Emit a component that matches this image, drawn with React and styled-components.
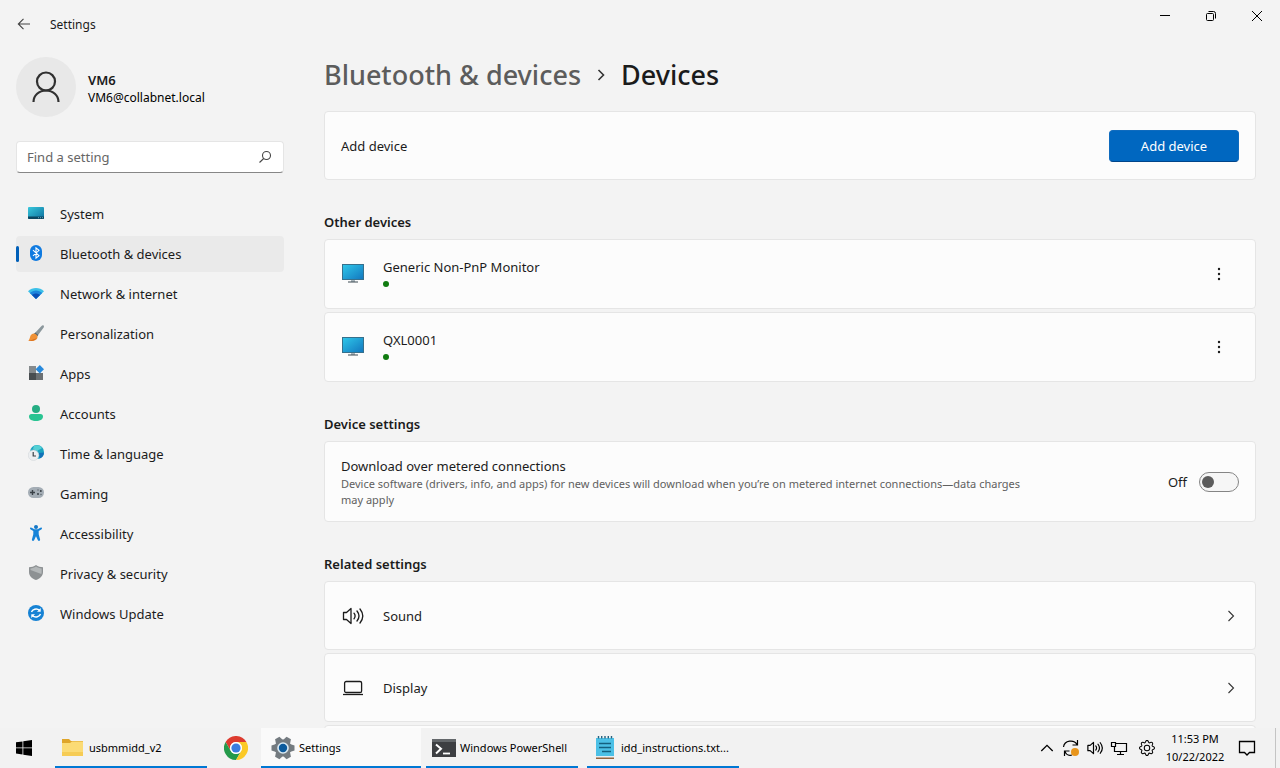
import React, { useState } from 'react';
import styled, { createGlobalStyle } from 'styled-components';
import { BsGear } from 'react-icons/bs';

const GlobalStyle = createGlobalStyle`
    * {
        box-sizing: border-box;
    }

    body {
        margin: 0;
        background-color: #f3f3f3;
        color: #1b1b1b;
        font-family: 'Noto Sans', 'Open Sans', sans-serif;
        font-size: 13px;
        line-height: 20px;
    }

    button, input {
        font: inherit;
        color: inherit;
    }

    a {
        color: inherit;
        text-decoration: none;
    }

    svg {
        display: block;
        flex: none;
    }
`;

const Desktop = styled.div`
    display: flex;
    flex-direction: column;
    height: 100vh;
    overflow: hidden;
`;

const Window = styled.div`
    flex: 1;
    min-height: 0;
    overflow: hidden;
`;

const TitleBar = styled.header`
    display: flex;
    justify-content: space-between;
    height: 48px;
`;

const TitleGroup = styled.div`
    display: flex;
    align-items: center;
    gap: 10px;
    padding-left: 8px;
    font-size: 12px;
`;

const WindowTitle = styled.span`
    padding-top: 2px;
`;

const PlainButton = styled.button`
    display: flex;
    align-items: center;
    justify-content: center;
    width: ${(props) => props.$width || 32}px;
    height: 32px;
    padding: 0;
    border: 0;
    border-radius: 4px;
    background: transparent;
`;

const WindowControls = styled.div`
    display: flex;
`;

const Body = styled.div`
    display: flex;
    gap: 40px;
    padding: 9px 24px 0 16px;
`;

const Sidebar = styled.aside`
    flex: none;
    width: 268px;
`;

const Profile = styled.div`
    display: flex;
    align-items: center;
    gap: 12px;
    margin-bottom: 24px;
`;

const Avatar = styled.div`
    width: 60px;
    height: 60px;
    border-radius: 50%;
    background-color: #e8e8e8;
`;

const ProfileText = styled.div`
    padding-top: 4px;
    line-height: 18px;
`;

const ProfileName = styled.div`
    font-weight: 600;
`;

const ProfileMail = styled.div`
    font-size: 12px;
    color: #000;
`;

const SearchBox = styled.label`
    display: flex;
    align-items: center;
    height: 32px;
    padding: 0 10px;
    border: 1px solid #e5e5e5;
    border-bottom-color: #868686;
    border-radius: 4px;
    background-color: #fff;
`;

const SearchInput = styled.input`
    flex: 1;
    min-width: 0;
    padding: 0;
    border: 0;
    outline: 0;
    background: transparent;

    &::placeholder {
        color: #666;
        opacity: 1;
    }
`;

const Nav = styled.nav`
    display: flex;
    flex-direction: column;
    gap: 4px;
    margin-top: 23px;
`;

const NavLink = styled.a`
    display: flex;
    align-items: center;
    gap: 9px;
    height: 36px;
    border-radius: 4px;
    background-color: ${(props) => (props.$active ? '#eaeaea' : 'transparent')};

    &::before {
        content: '';
        width: 3px;
        height: 16px;
        border-radius: 2px;
        background-color: ${(props) => (props.$active ? '#005fb8' : 'transparent')};
    }
`;

const NavText = styled.span`
    padding-left: 7px;
`;

const Main = styled.main`
    flex: 1;
    min-width: 0;
`;

const Breadcrumb = styled.div`
    display: flex;
    align-items: center;
    gap: 12px;
    margin-bottom: 18px;
    font-size: 27px;
    font-weight: 500;
    line-height: 36px;
    color: #5c5c5c;
`;

const PageTitle = styled.h1`
    margin: 0;
    font: inherit;
    color: #1b1b1b;
`;

const SectionTitle = styled.h2`
    margin: 32px 0 7px;
    font-size: 13px;
    font-weight: 600;
    line-height: 20px;
`;

const CardList = styled.div`
    display: flex;
    flex-direction: column;
    gap: 3px;
`;

const Card = styled.div`
    display: flex;
    align-items: center;
    gap: 18px;
    min-height: ${(props) => props.$minHeight || 69}px;
    padding: 8px 16px;
    border: 1px solid #e5e5e5;
    border-radius: 4px;
    background-color: #fcfcfc;
`;

const CardText = styled.div`
    flex: 1;
    min-width: 0;
`;

const Description = styled.div`
    max-width: 690px;
    font-size: 11px;
    line-height: 16px;
    color: #606060;
`;

const StatusDot = styled.div`
    width: 6px;
    height: 6px;
    margin: 4px 0;
    border-radius: 50%;
    background-color: #107c10;
`;

const PrimaryButton = styled.button`
    width: 130px;
    height: 32px;
    border: 1px solid #0f6bbe;
    border-bottom-color: #00458a;
    border-radius: 4px;
    background-color: #0067c0;
    color: #fff;
`;

const ToggleLabel = styled.label`
    display: flex;
    align-items: center;
    gap: 12px;
`;

const Toggle = styled.input`
    appearance: none;
    display: flex;
    align-items: center;
    justify-content: ${(props) => (props.checked ? 'flex-end' : 'flex-start')};
    width: 40px;
    height: 20px;
    margin: 0;
    padding: 0 2px;
    border: 1px solid #858585;
    border-radius: 10px;
    background-color: ${(props) => (props.checked ? '#0067c0' : '#f6f6f6')};

    &::before {
        content: '';
        width: 12px;
        height: 12px;
        border-radius: 50%;
        background-color: ${(props) => (props.checked ? '#fff' : '#5c5c5c')};
    }
`;

const Taskbar = styled.footer`
    display: flex;
    flex: none;
    gap: 1px;
    height: 40px;
    background-color: #f2f2f2;
    color: #000;
    font-size: 11px;
    line-height: 18px;
`;

const StartButton = styled.button`
    display: flex;
    align-items: center;
    justify-content: center;
    width: 48px;
    padding: 0;
    border: 0;
    background: transparent;
`;

const TaskList = styled.div`
    display: flex;
    flex: 1;
    gap: 1px;
    padding-left: 2px;
`;

const TaskButton = styled.button`
    display: flex;
    align-items: center;
    gap: 4px;
    width: ${(props) => (props.$active ? 160 : 152)}px;
    margin: 0 ${(props) => (props.$active ? 0 : 4)}px;
    padding: 2px ${(props) => (props.$active ? 10 : 6)}px 0;
    border: 0;
    border-bottom: 2px solid #0078d4;
    background-color: ${(props) => (props.$active ? '#fafafa' : 'transparent')};
    white-space: nowrap;
`;

const Tray = styled.div`
    display: flex;
    align-items: center;
`;

const TrayButton = styled.button`
    display: flex;
    align-items: center;
    justify-content: center;
    width: ${(props) => props.$width || 24}px;
    height: 40px;
    padding: 0;
    border: 0;
    background: transparent;
`;

const Clock = styled.div`
    width: 64px;
    text-align: center;
    white-space: nowrap;
`;

const ShowDesktop = styled.button`
    align-self: stretch;
    width: 5px;
    margin-left: 8px;
    padding: 0;
    border: 0;
    border-left: 1px solid #c4c4c4;
    background: transparent;
`;

const ChevronIcon = ({ size = 16, stroke = 1.1 }) => (
    <svg width={size} height={size} viewBox="0 0 16 16" fill="none" stroke="#333" strokeWidth={stroke}>
        <path d="M5.5 3l5 5-5 5" />
    </svg>
);

const MonitorIcon = () => (
    <svg width="24" height="24" viewBox="0 0 24 24">
        <defs>
            <linearGradient id="monitor" x1="0" y1="0" x2="1" y2="1">
                <stop offset="0" stopColor="#2fc8ea" />
                <stop offset="1" stopColor="#1276be" />
            </linearGradient>
        </defs>
        <rect x="1.5" y="2.5" width="21" height="15" fill="url(#monitor)" stroke="#36708c" />
        <path d="M10 18h4v2h-4z" fill="#a8b4ba" />
        <path d="M7 19.5h10v1H7z" fill="#3d4a52" />
    </svg>
);

const SpeakerIcon = ({ size = 24 }) => (
    <svg width={size} height={size} viewBox="0 0 24 24" fill="none" stroke="currentColor" strokeWidth={size < 20 ? 1.6 : 1.3} strokeLinejoin="round" strokeLinecap="round">
        <path d="M2.5 8.500h3L10 4.500v15l-4.500-4h-3z" />
        <path d="M13 9.200q2.200 2.800 0 5.600M16 7q4 5 0 10M19 5q5.600 7 0 14" />
    </svg>
);

const LaptopIcon = () => (
    <svg width="24" height="24" viewBox="0 0 24 24" fill="none" stroke="currentColor" strokeWidth="1.3">
        <rect x="3.600" y="5.500" width="17" height="11" rx="1.600" />
        <path d="M2 18.500h20" />
    </svg>
);

const navItems = [
    {
        name: 'System',
        icon: (
            <>
                <defs>
                    <linearGradient id="system" x1="0" y1="0" x2="1" y2="1">
                        <stop offset="0" stopColor="#38c8dc" />
                        <stop offset="1" stopColor="#0c6f9e" />
                    </linearGradient>
                </defs>
                <rect y="2" width="16" height="12" rx="1" fill="url(#system)" />
                <path d="M0 11.500h16V13a1 1 0 0 1-1 1H1a1 1 0 0 1-1-1z" fill="#0b4560" />
                <path d="M10 12.700h1M12 12.700h1M14 12.700h1" stroke="#7fc4da" strokeWidth=".8" />
            </>
        ),
    },
    {
        name: 'Bluetooth & devices',
        active: true,
        icon: (
            <>
                <rect x="2" width="12" height="16" rx="6" fill="#0f7ae0" />
                <path d="M5 5.200l6 5.500-3 2.500V2.800l3 2.500-6 5.500" fill="none" stroke="#fff" strokeWidth="1.100" />
            </>
        ),
    },
    {
        name: 'Network & internet',
        icon: (
            <>
                <path d="M0 6.300C4.500 1.900 11.500 1.900 16 6.300L8 14z" fill="#3bc0e8" />
                <path d="M1.800 8C5.500 4.600 10.500 4.600 14.200 8L8 14z" fill="#1d86dc" />
                <path d="M4 10.100c2.400-2 5.600-2 8 0L8 14z" fill="#0a4fb4" />
            </>
        ),
    },
    {
        name: 'Personalization',
        icon: (
            <>
                <path d="M15.600.500c.6.600.4 1.500-.1 2.200L9 11.500 6 9 13.500.900c.600-.700 1.500-1 2.100-.400z" fill="#8b979c" />
                <path d="M9 11.500L6 9l1.300-1.500 3 2.500z" fill="#56666f" />
                <path d="M5.500 8.500c2 0 4 1.500 4 3.400C9.500 15 5 16.800.3 15.800 2.500 14.200 1.300 9 5.500 8.500z" fill="#f09237" />
                <path d="M.3 15.800c3 .3 7-.500 8.700-2.900-2 .9-4.800 2-8.700 2.900z" fill="#cf651b" />
            </>
        ),
    },
    {
        name: 'Apps',
        icon: (
            <>
                <path d="M1 1h7v7H1z" fill="#858a8d" />
                <path d="M1 8h7v7H1z" fill="#484d50" />
                <path d="M8 8h7v7H8z" fill="#6b7073" />
                <path d="M11.800 0L16 4.200l-4.200 4.200-4.200-4.200z" fill="#2789dc" />
            </>
        ),
    },
    {
        name: 'Accounts',
        icon: (
            <>
                <circle cx="8" cy="4" r="4" fill="#25ad83" />
                <path d="M3.500 9h9A2.500 2.500 0 0 1 15 11.500C15 14.500 12 16 8 16s-7-1.500-7-4.500A2.500 2.500 0 0 1 3.500 9z" fill="#29c492" />
            </>
        ),
    },
    {
        name: 'Time & language',
        icon: (
            <>
                <circle cx="9" cy="7" r="7" fill="#1ba4c0" />
                <path d="M6 .700c4-1.500 7 .2 8 2.300-1.500 2-3.500 1-4.500 3L5 4z" fill="#54d0d4" />
                <path d="M11 8l5-.500c0 3-2 5.500-4.500 6z" fill="#1272b8" />
                <circle cx="5.500" cy="10.200" r="5.300" fill="#eceef0" stroke="#cdd2d6" strokeWidth=".5" />
                <path d="M5.200 7v4h2.800" fill="none" stroke="#3a4046" strokeWidth="1.200" />
            </>
        ),
    },
    {
        name: 'Gaming',
        icon: (
            <>
                <rect y="2" width="16" height="11" rx="5.500" fill="#a4adb5" />
                <path d="M4.500 5v5M2 7.500h5" stroke="#394046" strokeWidth="1.400" />
                <circle cx="10" cy="9" r="1" fill="#394046" />
                <circle cx="12.800" cy="6" r="1" fill="#394046" />
                <circle cx="10" cy="5" r=".7" fill="#59636b" />
                <circle cx="13" cy="9.500" r=".7" fill="#59636b" />
            </>
        ),
    },
    {
        name: 'Accessibility',
        icon: (
            <>
                <circle cx="8" cy="2" r="2" fill="#1577c6" />
                <path d="M2.500 2.600c-.9.600-.5 1.600.2 1.900L5.300 6v3.300L3.900 14.600c-.3 1.500 1.700 1.900 2.200.6L8 11.200l1.900 4c.5 1.300 2.500.9 2.200-.6L10.700 9.300V6l2.600-1.500c.7-.3 1.100-1.300.2-1.900-.6-.4-1 0-1.600.300L9.600 4.200H6.400L4.100 2.900c-.6-.300-1-.700-1.600-.300z" fill="#1683d8" />
            </>
        ),
    },
    {
        name: 'Privacy & security',
        icon: (
            <>
                <path d="M8 0c2 1.600 4.500 2.200 7 2.300V7c0 3.800-3 6.800-7 8C4 13.800 1 10.800 1 7V2.300C3.500 2.200 6 1.600 8 0z" fill="#8d9193" />
                <path d="M8 1.500c1.700 1.200 3.700 1.700 5.700 1.900V7c0 .7-.1 1.300-.4 2L2.500 5V3.400C4.500 3.200 6.300 2.700 8 1.500z" fill="#b3b7b8" />
            </>
        ),
    },
    {
        name: 'Windows Update',
        icon: (
            <>
                <circle cx="8" cy="8" r="8" fill="#1682d4" />
                <path d="M3.500 7C4.300 4.500 8.500 2.700 11.800 5.500M12.500 9c-.8 2.500-5 4.300-8.300 1.500" fill="none" stroke="#fff" strokeWidth="1.400" />
                <path d="M12.700 3v3.700H9zM3.300 13V9.300H7z" fill="#fff" />
            </>
        ),
    },
];

const devices = ['Generic Non-PnP Monitor', 'QXL0001'];

function TopBar() {
    return (
        <TitleBar>
            <TitleGroup>
                <PlainButton aria-label="Back">
                    <svg width="14" height="14" viewBox="0 0 14 14" fill="none" stroke="#444" strokeWidth="1.100">
                        <path d="M13 7H1.500M6.500 1.800L1.300 7l5.200 5.200" />
                    </svg>
                </PlainButton>
                <WindowTitle>Settings</WindowTitle>
            </TitleGroup>
            <WindowControls>
                <PlainButton $width={46} aria-label="Minimize">
                    <svg width="10" height="10" viewBox="0 0 10 10" stroke="#000">
                        <path d="M0 4.500h10" />
                    </svg>
                </PlainButton>
                <PlainButton $width={46} aria-label="Restore">
                    <svg width="10" height="10" viewBox="0 0 10 10" fill="none" stroke="#000">
                        <rect x=".5" y="2.500" width="7" height="7" rx="1" />
                        <path d="M2.500.500h5a2 2 0 0 1 2 2v5" />
                    </svg>
                </PlainButton>
                <PlainButton $width={46} aria-label="Close">
                    <svg width="10" height="10" viewBox="0 0 10 10" stroke="#000">
                        <path d="M0 0l10 10M10 0L0 10" />
                    </svg>
                </PlainButton>
            </WindowControls>
        </TitleBar>
    );
}

function SideNav() {
    return (
        <Sidebar>
            <Profile>
                <Avatar>
                    <svg width="60" height="60" viewBox="0 0 60 60" fill="none" stroke="#303030" strokeWidth="2.200">
                        <circle cx="30" cy="24.500" r="9" />
                        <path d="M17.500 45C17.500 38.500 23 33.500 30 33.500S42.500 38.500 42.500 45" />
                    </svg>
                </Avatar>
                <ProfileText>
                    <ProfileName>VM6</ProfileName>
                    <ProfileMail>VM6@collabnet.local</ProfileMail>
                </ProfileText>
            </Profile>
            <SearchBox>
                <SearchInput type="text" placeholder="Find a setting" aria-label="Find a setting" />
                <svg width="16" height="16" viewBox="0 0 16 16" fill="none" stroke="#444" strokeWidth="1.100">
                    <circle cx="9.500" cy="6.500" r="4" />
                    <path d="M6.700 9.500L2.500 13.500" />
                </svg>
            </SearchBox>
            <Nav>
                {navItems.map((item) => (
                    <NavLink key={item.name} href="#" $active={item.active}>
                        <svg width="16" height="18" viewBox="0 0 16 18">{item.icon}</svg>
                        <NavText>{item.name}</NavText>
                    </NavLink>
                ))}
            </Nav>
        </Sidebar>
    );
}

function DevicesPage() {
    const [metered, setMetered] = useState(false);

    return (
        <Main>
            <Breadcrumb>
                <a href="#">Bluetooth &amp; devices</a>
                <ChevronIcon stroke={1.6} />
                <PageTitle>Devices</PageTitle>
            </Breadcrumb>
            <Card>
                <CardText>Add device</CardText>
                <PrimaryButton>Add device</PrimaryButton>
            </Card>

            <SectionTitle>Other devices</SectionTitle>
            <CardList>
                {devices.map((device) => (
                    <Card key={device} $minHeight={70}>
                        <MonitorIcon />
                        <CardText>
                            {device}
                            <StatusDot />
                        </CardText>
                        <PlainButton $width={40} aria-label={`More options for ${device}`}>
                            <svg width="16" height="16" viewBox="0 0 16 16" fill="#1b1b1b">
                                <circle cx="8" cy="3" r="1.200" />
                                <circle cx="8" cy="8" r="1.200" />
                                <circle cx="8" cy="13" r="1.200" />
                            </svg>
                        </PlainButton>
                    </Card>
                ))}
            </CardList>

            <SectionTitle>Device settings</SectionTitle>
            <Card $minHeight={81}>
                <CardText>
                    Download over metered connections
                    <Description>
                        Device software (drivers, info, and apps) for new devices will download when you’re on metered internet connections—data charges may apply
                    </Description>
                </CardText>
                <ToggleLabel>
                    {metered ? 'On' : 'Off'}
                    <Toggle
                        type="checkbox"
                        role="switch"
                        aria-label="Download over metered connections"
                        checked={metered}
                        onChange={() => setMetered(!metered)}
                    />
                </ToggleLabel>
            </Card>

            <SectionTitle>Related settings</SectionTitle>
            <CardList>
                <Card as="a" href="#">
                    <SpeakerIcon />
                    <CardText>Sound</CardText>
                    <ChevronIcon />
                </Card>
                <Card as="a" href="#">
                    <LaptopIcon />
                    <CardText>Display</CardText>
                    <ChevronIcon />
                </Card>
                <Card />
            </CardList>
        </Main>
    );
}

function BottomBar() {
    return (
        <Taskbar>
            <StartButton aria-label="Start">
                <svg width="16" height="16" viewBox="0 0 16 16">
                    <path d="M0 2.300l6.500-.9v6.100H0zM7.300 1.300L16 0v7.500H7.300zM0 8.300h6.500v6.200L0 13.600zM7.300 8.300H16V16l-8.700-1.300z" />
                </svg>
            </StartButton>
            <TaskList>
                <TaskButton>
                    <svg width="24" height="22" viewBox="0 0 24 22">
                        <path d="M1 2h7l2 2h12v4H1z" fill="#dfa52a" />
                        <path d="M1 6h8l2-1.500h11V19H1z" fill="#fbdb75" />
                        <path d="M1 15h21v4H1z" fill="#f6cc55" />
                    </svg>
                    <span>usbmmidd_v2</span>
                </TaskButton>
                <StartButton aria-label="Google Chrome">
                    <svg width="24" height="24" viewBox="0 0 24 24">
                        <path d="M1.600 6A12 12 0 0 1 22.400 6L12 6A6 6 0 0 0 6.800 15Z" fill="#dd3b2f" />
                        <path d="M1.600 6L6.800 15A6 6 0 0 0 17.200 15L12 24A12 12 0 0 1 1.600 6Z" fill="#259a4b" />
                        <path d="M22.400 6L12 6A6 6 0 0 1 17.200 15L12 24A12 12 0 0 0 22.400 6Z" fill="#fbc926" />
                        <circle cx="12" cy="12" r="6" fill="#fff" />
                        <circle cx="12" cy="12" r="4.600" fill="#3b7de0" />
                    </svg>
                </StartButton>
                <TaskButton $active>
                    <svg width="24" height="24" viewBox="0 0 24 24">
                        {[0, 60, 120].map((angle) => (
                            <path key={angle} d="M8 5L9.500.500h5L16 5v14l-1.500 4.500h-5L8 19z" fill="#747b80" transform={`rotate(${angle + 30} 12 12)`} />
                        ))}
                        <circle cx="12" cy="12" r="8.500" fill="#747b80" />
                        <circle cx="12" cy="12" r="5.800" fill="#d9e9f3" />
                        <circle cx="12" cy="12" r="4.200" fill="#0b5a9c" />
                    </svg>
                    <span>Settings</span>
                </TaskButton>
                <TaskButton>
                    <svg width="24" height="20" viewBox="0 0 24 20">
                        <path d="M0 1h24v18H0z" fill="#3d3f42" />
                        <path d="M0 1h24v3H0z" fill="#63676a" />
                        <path d="M4 6.500l5 4.300-5 4.700" fill="none" stroke="#fff" strokeWidth="2" />
                        <path d="M11 15.500h7" stroke="#fff" strokeWidth="1.800" />
                    </svg>
                    <span>Windows PowerShell</span>
                </TaskButton>
                <TaskButton>
                    <svg width="24" height="24" viewBox="0 0 24 24">
                        <path d="M3 2h18v18H3z" fill="#4cc0e6" />
                        <path d="M3 21h18v2H3z" fill="#94643f" />
                        <path d="M3 20h18v1.500H3z" fill="#e6eef2" />
                        <path d="M5.500 0v2.500M8.700 0v2.500M12 0v2.500M15.300 0v2.500M18.500 0v2.500" stroke="#27627e" strokeWidth="1.400" />
                        <path d="M6 7.500h12M6 11.500h12M9 15.500h9" stroke="#14607f" strokeWidth="1.300" />
                    </svg>
                    <span>idd_instructions.txt...</span>
                </TaskButton>
            </TaskList>
            <Tray>
                <TrayButton aria-label="Show hidden icons">
                    <svg width="14" height="14" viewBox="0 0 14 14" fill="none" stroke="#000" strokeWidth="1.300">
                        <path d="M1.300 10L7 4.300 12.700 10" />
                    </svg>
                </TrayButton>
                <TrayButton aria-label="Update status">
                    <svg width="18" height="18" viewBox="0 0 18 18" fill="none" stroke="#000" strokeWidth="1.200">
                        <path d="M1.500 8C2.500 1.200 12 .2 15 5.500M15.500 1v5h-5M10 16c-3 1-6-.500-7-3.500M2.500 17v-5h5" />
                        <circle cx="13" cy="13" r="4" fill="#e8951c" stroke="none" />
                    </svg>
                </TrayButton>
                <TrayButton aria-label="Volume">
                    <SpeakerIcon size={18} />
                </TrayButton>
                <TrayButton aria-label="Network">
                    <svg width="18" height="18" viewBox="0 0 18 18" fill="none" stroke="#000" strokeWidth="1.200">
                        <path d="M6 4.500h10.500v8H4.500V8M10.500 12.500v3M7 15.500h7" />
                        <path d="M1.500 3.500h4v4h-4z" />
                    </svg>
                </TrayButton>
                <TrayButton $width={32} aria-label="Settings">
                    <BsGear size={16} />
                </TrayButton>
                <Clock>
                    <div>11:53 PM</div>
                    <div>10/22/2022</div>
                </Clock>
                <TrayButton $width={40} aria-label="Notifications">
                    <svg width="18" height="18" viewBox="0 0 18 18" fill="none" stroke="#000" strokeWidth="1.300">
                        <path d="M1.500 2.500h15v11h-5L9 16l-2.500-2.500h-5z" />
                    </svg>
                </TrayButton>
                <ShowDesktop aria-label="Show desktop" />
            </Tray>
        </Taskbar>
    );
}

function App() {
    return (
        <>
            <GlobalStyle />
            <Desktop>
                <Window>
                    <TopBar />
                    <Body>
                        <SideNav />
                        <DevicesPage />
                    </Body>
                </Window>
                <BottomBar />
            </Desktop>
        </>
    );
}

export default App;
